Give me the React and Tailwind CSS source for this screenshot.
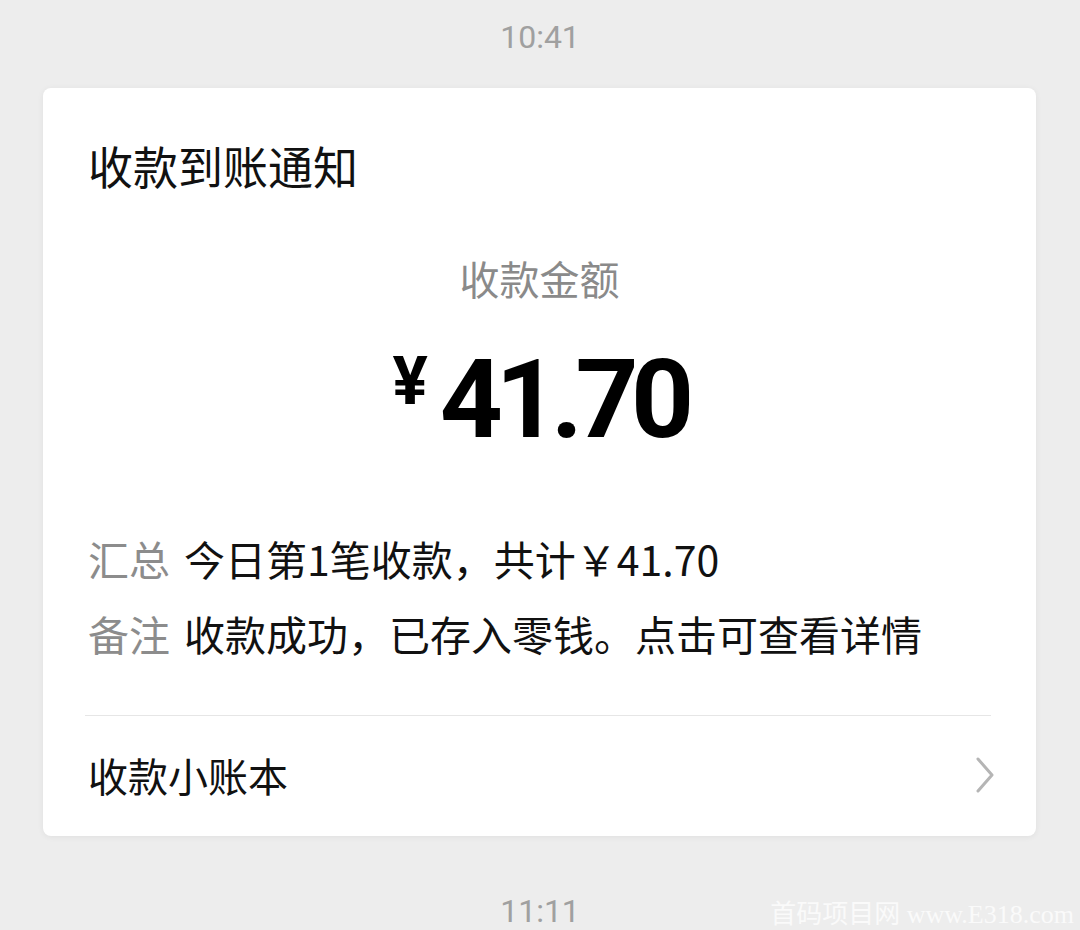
export default function App() {
  const cjk = { fontFamily: '"Noto Sans CJK SC", "Noto Sans", sans-serif' };

  return (
    <div className="relative min-h-[930px] w-[1080px] overflow-hidden bg-[#ededed]" style={cjk}>
      {/* top timestamp */}
      <div className="pt-[17px] text-center text-[32px] leading-[40px] text-[#a0a0a0] font-['Roboto',sans-serif]">
        10:41
      </div>

      {/* payment card */}
      <div className="mt-[31px] ml-[43px] w-[993px] rounded-[8px] bg-white px-[45px] pt-[51px] pb-[37px] shadow-[0_1px_6px_rgba(0,0,0,0.06)]">
        <div className="text-[45px] leading-[54px] text-[#111]">收款到账通知</div>

        <div className="mt-[61px] text-center text-[40px] leading-[48px] text-[#8a8a8a]">收款金额</div>

        <div className="mt-[43px] flex items-start justify-center text-black font-['Roboto',sans-serif] font-bold">
          <span className="mt-[4px] mr-[12px] text-[66px] leading-[66px]">¥</span>
          <span className="text-[110px] leading-[110px] tracking-[-7.5px]">41.70</span>
        </div>

        <div className="mt-[66px] text-[41px] leading-[75px]">
          <div className="flex">
            <span className="w-[96px] shrink-0 text-[#8c8c8c]">汇总</span>
            <span className="text-[#111]">今日第1笔收款，共计￥41.70</span>
          </div>
          <div className="flex">
            <span className="w-[96px] shrink-0 text-[#8c8c8c]">备注</span>
            <span className="text-[#111]">收款成功，已存入零钱。点击可查看详情</span>
          </div>
        </div>

        <div className="mt-[44px] -ml-[3px] h-px bg-[#e6e6e6]" />

        <div className="mt-[35px] flex items-center justify-between">
          <span className="text-[40px] leading-[48px] text-[#111]">收款小账本</span>
          <svg width="20" height="36" viewBox="0 0 20 36" className="mr-[-4px]">
            <polyline points="3,2 17,18 3,34" fill="none" stroke="#b5b5b5" strokeWidth="3" strokeLinecap="round" strokeLinejoin="round" />
          </svg>
        </div>
      </div>

      {/* bottom timestamp */}
      <div className="mt-[55px] text-center text-[32px] leading-[40px] text-[#a0a0a0] font-['Roboto',sans-serif]">
        11:11
      </div>

      {/* watermark */}
      <div
        className="absolute right-[6px] bottom-[-2px] text-[26px] leading-[36px] text-[#fafafa]"
        style={{ fontFamily: '"Liberation Serif", "Noto Sans CJK SC", serif' }}
      >
        首码项目网 www.E318.com
      </div>
    </div>
  );
}
